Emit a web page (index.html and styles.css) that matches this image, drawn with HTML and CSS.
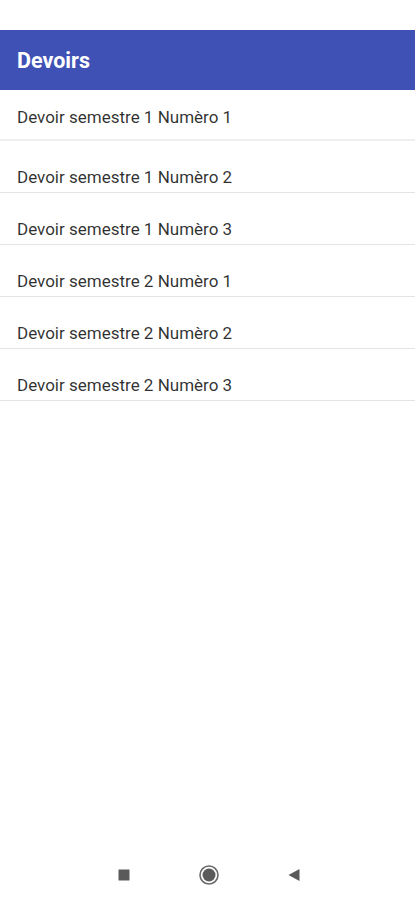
FILE: index.html
```html
<!DOCTYPE html>
<html lang="fr">
<head>
<meta charset="utf-8">
<title>Devoirs</title>
<link rel="stylesheet" href="styles.css">
</head>
<body>
<div class="screen">
  <div class="status"></div>
  <header class="appbar"><h1 class="title">Devoirs</h1></header>
  <ul class="list">
    <li class="item first">Devoir semestre 1 Numèro 1</li>
    <li class="item">Devoir semestre 1 Numèro 2</li>
    <li class="item">Devoir semestre 1 Numèro 3</li>
    <li class="item">Devoir semestre 2 Numèro 1</li>
    <li class="item">Devoir semestre 2 Numèro 2</li>
    <li class="item">Devoir semestre 2 Numèro 3</li>
  </ul>
  <nav class="navbar">
    <svg class="nav-icon" width="14" height="14" viewBox="0 0 14 14"><rect x="1.5" y="1.5" width="11" height="11" fill="#5a5a5a"/></svg>
    <svg class="nav-icon" width="22" height="22" viewBox="0 0 22 22"><circle cx="11" cy="11" r="9" fill="none" stroke="#6a6a6a" stroke-width="1.6"/><circle cx="11" cy="11" r="6.5" fill="#5a5a5a"/></svg>
    <svg class="nav-icon" width="14" height="14" viewBox="0 0 14 14"><polygon points="12.5,1 12.5,13 1.5,7" fill="#5a5a5a"/></svg>
  </nav>
</div>
</body>
</html>
```
FILE: styles.css
```css
* { box-sizing: border-box; }
html, body { margin: 0; padding: 0; background: #fff; }
body { font-family: Roboto, "Liberation Sans", sans-serif; }
.screen {
  width: 415px;
  height: 900px;
  display: flex;
  flex-direction: column;
  background: #fff;
}
.status { height: 30px; flex: none; }
.appbar {
  height: 60px;
  flex: none;
  background: #3f51b5;
  display: flex;
  align-items: center;
  padding: 0 17px;
}
.title {
  margin: 0;
  color: #fff;
  font-size: 21.5px;
  font-weight: 700;
  line-height: 24px;
  padding-top: 2px;
}
.list {
  list-style: none;
  margin: 0;
  padding: 0;
  flex: 1;
}
.item {
  font-size: 17px;
  line-height: 20px;
  color: rgba(0, 0, 0, 0.82);
  padding: 26px 17px 5px;
  border-bottom: 1px solid #e4e4e4;
}
.item.first {
  padding: 17px 17px 12px;
  border-bottom: 2px solid #efefef;
}
.navbar {
  height: 50px;
  flex: none;
  display: flex;
  align-items: center;
  justify-content: center;
  gap: 67px;
  padding-left: 2px;
}
.nav-icon { display: block; }
```
